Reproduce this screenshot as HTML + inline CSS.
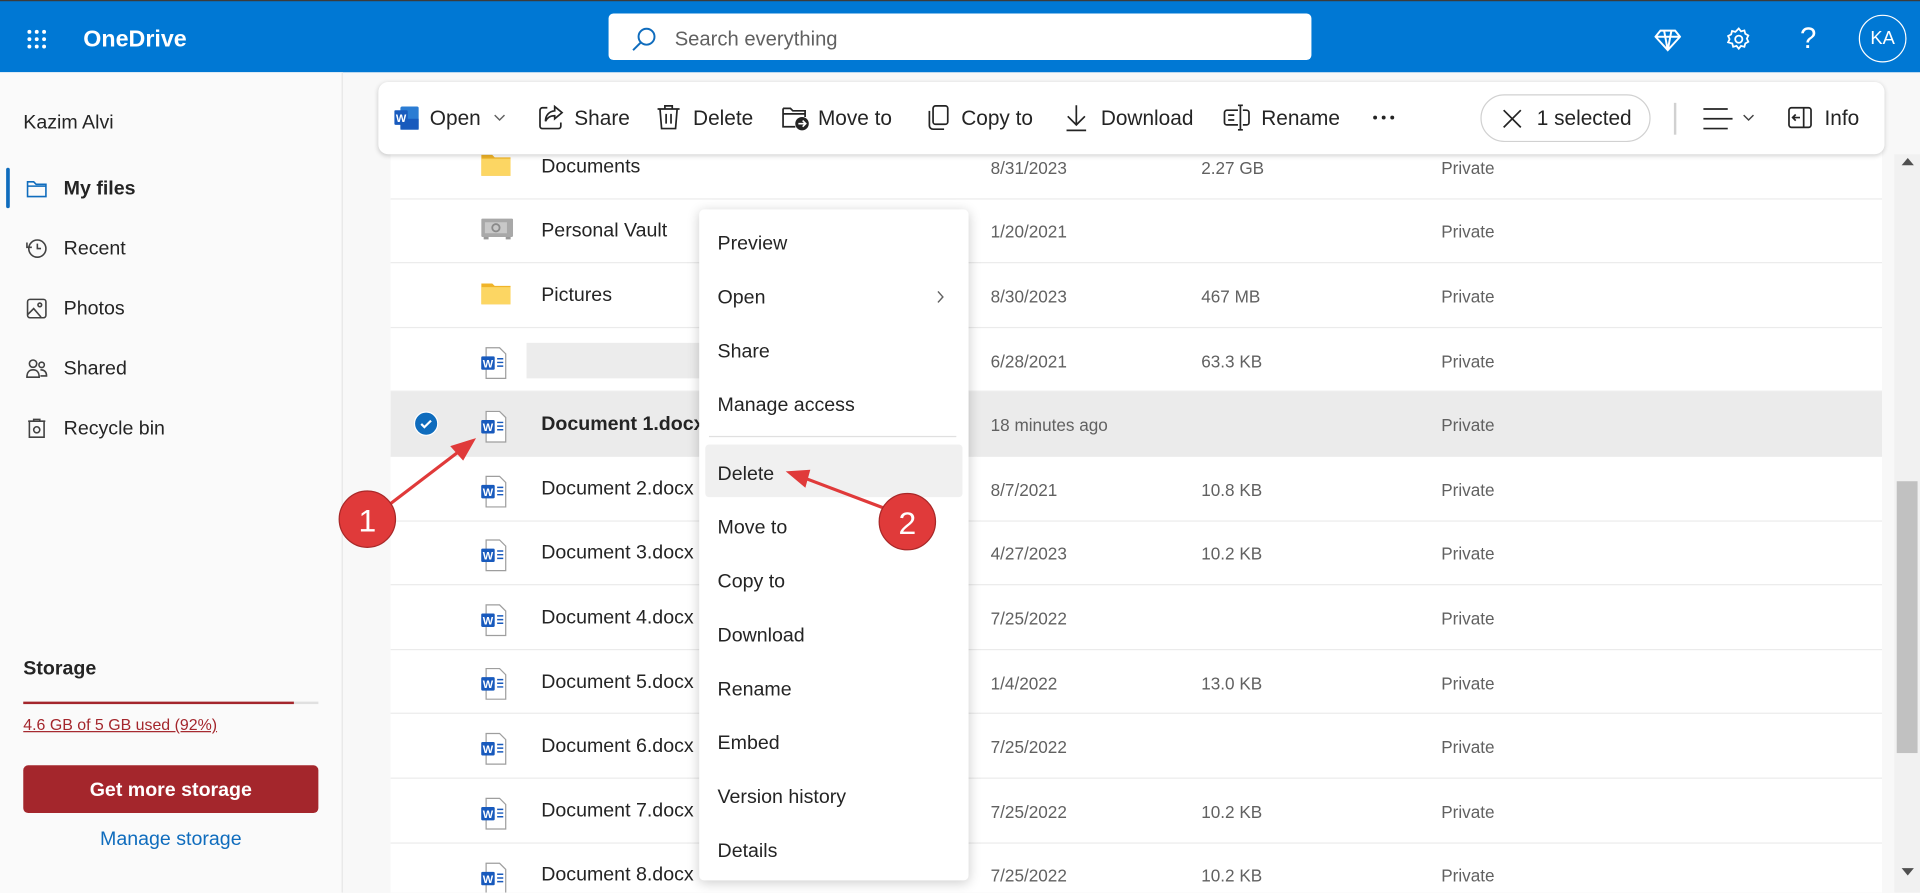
<!DOCTYPE html>
<html><head><meta charset="utf-8"><style>
*{box-sizing:border-box;margin:0;padding:0}
html,body{width:1920px;height:893px;overflow:hidden;background:#f8f8f8}
#s{position:absolute;left:0;top:0;width:1568px;height:729px;transform:scale(1.22449);transform-origin:0 0;font-family:"Liberation Sans",sans-serif;color:#242424;background:#f8f8f8;overflow:hidden}
.a{position:absolute}
.hdr{left:0;top:0;width:1568px;height:59px;background:#0078d4;border-top:1px solid #3b3b3b}
.side{left:0;top:59px;width:280px;height:670px;background:#fafafa;border-right:1px solid #e6e6e6}
.nav{position:absolute;left:52px;font-size:16px;color:#242424;transform:translateY(-50%)}
.ni{position:absolute;left:21px;width:18px;height:18px;transform:translateY(-50%)}
.tbl{left:319px;top:110px;width:1218px;height:619px;background:#fff}
.row{position:absolute;left:0;width:1218px;height:52.6px;border-bottom:1px solid #ebebeb}
.row span{position:absolute;top:52%;transform:translateY(-50%);font-size:16px}
.nm{left:123px;color:#242424}
.dt{left:490px;color:#616161;font-size:14px!important}
.sz{left:662px;color:#616161;font-size:14px!important}
.pv{left:858px;color:#616161;font-size:14px!important}
.ic{left:74px}
.cmd{left:309px;top:67px;width:1230px;height:59px;background:#fff;border-radius:8px;box-shadow:0 1px 4px rgba(0,0,0,.18)}
.ct{position:absolute;top:50%;transform:translateY(-50%);font-size:17px;color:#242424}
.menu{left:571px;top:171px;width:220px;height:548px;background:#fff;border-radius:4px;box-shadow:0 2px 10px rgba(0,0,0,.2)}
.mi{position:absolute;left:15px;font-size:16px;color:#242424;transform:translateY(-40%)}
</style></head><body><div id="s">
<div class="a hdr">
<svg class="a" style="left:21px;top:22px" width="18" height="18" viewBox="0 0 18 18" fill="#fff"><circle cx="3" cy="3" r="1.6"/><circle cx="9" cy="3" r="1.6"/><circle cx="15" cy="3" r="1.6"/><circle cx="3" cy="9" r="1.6"/><circle cx="9" cy="9" r="1.6"/><circle cx="15" cy="9" r="1.6"/><circle cx="3" cy="15" r="1.6"/><circle cx="9" cy="15" r="1.6"/><circle cx="15" cy="15" r="1.6"/></svg>
<div class="a" style="left:68px;top:21px;font-size:19px;font-weight:bold;color:#fff">OneDrive</div>
<div class="a" style="left:497px;top:10px;width:574px;height:38px;background:#fff;border-radius:4px"></div>
<svg class="a" style="left:515px;top:20px" width="22" height="22" viewBox="0 0 22 22" fill="none" stroke="#0f6cbd" stroke-width="1.6"><circle cx="13" cy="9" r="6.5"/><path d="M8.5 13.5L2 20"/></svg>
<div class="a" style="left:551px;top:22px;font-size:16.5px;color:#616161">Search everything</div>
<svg class="a" style="left:1351px;top:22px" width="22" height="20" viewBox="0 0 22 20" fill="none" stroke="#fff" stroke-width="1.6"><path d="M5 2h12l4 5-10 11L1 7z M1 7h20 M8 2l3 16 3-16"/></svg>
<svg class="a" style="left:1409px;top:20px" width="22" height="22" viewBox="0 0 24 24" fill="none" stroke="#fff" stroke-width="1.6"><circle cx="12" cy="12" r="3.2"/><path d="M12 2.5l2 2.5 3-.8.8 3 2.7 1.5-1.3 2.8 1.3 2.8-2.7 1.5-.8 3-3-.8-2 2.5-2-2.5-3 .8-.8-3L2.5 14.8l1.3-2.8-1.3-2.8 2.7-1.5.8-3 3 .8z"/></svg>
<div class="a" style="left:1470px;top:17px;font-size:24px;color:#fff">?</div>
<div class="a" style="left:1518px;top:11px;width:39px;height:39px;border:1px solid #fff;border-radius:50%;color:#fff;font-size:15px;text-align:center;line-height:37px">KA</div>
</div>

<div class="a side">
<div class="a" style="left:19px;top:33px;font-size:16px">Kazim Alvi</div>
<div class="a" style="left:5px;top:78px;width:3px;height:33px;background:#0f6cbd;border-radius:2px"></div>
</div>
<svg class="ni" style="top:154px" viewBox="0 0 18 18" fill="none" stroke="#0f6cbd" stroke-width="1.3"><path d="M1.5 3.5h5l2 2h8v10h-15z M1.5 7h15"/></svg>
<div class="nav" style="top:155px;font-weight:bold">My files</div>
<svg class="ni" style="top:203px" viewBox="0 0 18 18" fill="none" stroke="#424242" stroke-width="1.3"><circle cx="9.5" cy="9" r="7"/><path d="M9.5 5v4h3 M1 4v4h4"/></svg>
<div class="nav" style="top:204px">Recent</div>
<svg class="ni" style="top:252px" viewBox="0 0 18 18" fill="none" stroke="#424242" stroke-width="1.3"><rect x="1.5" y="1.5" width="15" height="15" rx="2"/><circle cx="11.5" cy="6" r="1.5"/><path d="M1.5 14l5-5 6 7"/></svg>
<div class="nav" style="top:253px">Photos</div>
<svg class="ni" style="top:301px" viewBox="0 0 18 18" fill="none" stroke="#424242" stroke-width="1.3"><circle cx="6" cy="5" r="3"/><circle cx="13" cy="6" r="2.2"/><path d="M1 16c0-4 2-6 5-6s5 2 5 6z M12 10c3 0 5 1.5 5 5h-5"/></svg>
<div class="nav" style="top:302px">Shared</div>
<svg class="ni" style="top:350px" viewBox="0 0 18 18" fill="none" stroke="#424242" stroke-width="1.3"><path d="M2 3h14 M3 3v13h12V3 M6.5 3V1.5h5V3"/><circle cx="9" cy="10" r="2.5"/></svg>
<div class="nav" style="top:351px">Recycle bin</div>
<div class="a" style="left:19px;top:538px;font-size:16px;font-weight:bold">Storage</div>
<div class="a" style="left:19px;top:573px;width:241px;height:2px;background:#e0e0e0"></div>
<div class="a" style="left:19px;top:573px;width:221px;height:2px;background:#a4262c"></div>
<div class="a" style="left:19px;top:584px;font-size:13px;color:#a4262c;text-decoration:underline">4.6 GB of 5 GB used (92%)</div>
<div class="a" style="left:19px;top:625px;width:241px;height:39px;background:#a4262c;border-radius:4px;color:#fff;font-weight:bold;font-size:16px;text-align:center;line-height:41px">Get more storage</div>
<div class="a" style="left:19px;top:677px;width:241px;text-align:center;font-size:16px;color:#0f6cbd">Manage storage</div>

<div class="a tbl">
<div class="row" style="top:0"><span class="ic"><svg width="24" height="20" viewBox="0 0 24 20"><path d="M0 2h9l2 2h13v15H0z" fill="#f0b429"/><path d="M0 5h24v14H0z" fill="#fcd663"/></svg></span><span class="nm">Documents</span><span class="dt">8/31/2023</span><span class="sz">2.27 GB</span><span class="pv">Private</span></div>
<div class="row" style="top:52.6px"><span class="ic"><svg width="26" height="20" viewBox="0 0 26 20"><rect x="0" y="2" width="26" height="15" rx="1" fill="#a8a8a8"/><rect x="3" y="5" width="18" height="9" fill="#c8c8c8"/><circle cx="12" cy="9.5" r="3" fill="none" stroke="#8a8a8a" stroke-width="1.5"/><rect x="2" y="17" width="4" height="2" fill="#999"/><rect x="20" y="17" width="4" height="2" fill="#999"/></svg></span><span class="nm">Personal Vault</span><span class="dt">1/20/2021</span><span class="pv">Private</span></div>
<div class="row" style="top:105.2px"><span class="ic"><svg width="24" height="20" viewBox="0 0 24 20"><path d="M0 2h9l2 2h13v15H0z" fill="#f0b429"/><path d="M0 5h24v14H0z" fill="#fcd663"/></svg></span><span class="nm">Pictures</span><span class="dt">8/30/2023</span><span class="sz">467 MB</span><span class="pv">Private</span></div>
<div class="row" style="top:157.8px"><div class="a" style="left:111px;top:12px;width:145px;height:29px;background:#ececec"></div><span class="dt">6/28/2021</span><span class="sz">63.3 KB</span><span class="pv">Private</span></div>
<div class="row" style="top:210.4px;background:#ebebeb"><svg class="a" style="left:19px;top:16px" width="20" height="20" viewBox="0 0 20 20"><circle cx="10" cy="10" r="9.5" fill="#0f6cbd" stroke="#fff" stroke-width="1"/><path d="M6 10.2l2.6 2.6L14 7.5" fill="none" stroke="#fff" stroke-width="1.8"/></svg><span class="nm" style="font-weight:bold">Document 1.docx</span><span class="dt">18 minutes ago</span><span class="pv">Private</span></div>
<div class="row" style="top:263px"><span class="nm">Document 2.docx</span><span class="dt">8/7/2021</span><span class="sz">10.8 KB</span><span class="pv">Private</span></div>
<div class="row" style="top:315.6px"><span class="nm">Document 3.docx</span><span class="dt">4/27/2023</span><span class="sz">10.2 KB</span><span class="pv">Private</span></div>
<div class="row" style="top:368.2px"><span class="nm">Document 4.docx</span><span class="dt">7/25/2022</span><span class="pv">Private</span></div>
<div class="row" style="top:420.8px"><span class="nm">Document 5.docx</span><span class="dt">1/4/2022</span><span class="sz">13.0 KB</span><span class="pv">Private</span></div>
<div class="row" style="top:473.4px"><span class="nm">Document 6.docx</span><span class="dt">7/25/2022</span><span class="pv">Private</span></div>
<div class="row" style="top:526px"><span class="nm">Document 7.docx</span><span class="dt">7/25/2022</span><span class="sz">10.2 KB</span><span class="pv">Private</span></div>
<div class="row" style="top:578.6px"><span class="nm">Document 8.docx</span><span class="dt">7/25/2022</span><span class="sz">10.2 KB</span><span class="pv">Private</span></div>
</div>

<div class="a" style="left:1547px;top:126px;width:21px;height:603px;background:#f1f1f1"></div>
<div class="a" style="left:1549px;top:393px;width:17px;height:222px;background:#c1c1c1"></div>
<div class="a" style="left:1553px;top:129px;border-left:5px solid transparent;border-right:5px solid transparent;border-bottom:6px solid #505050"></div>
<div class="a" style="left:1553px;top:709px;border-left:5px solid transparent;border-right:5px solid transparent;border-top:6px solid #505050"></div>

<div class="a cmd">
<svg class="a" style="left:13px;top:20px" width="20" height="19" viewBox="0 0 20 19"><rect x="5" y="0" width="15" height="19" rx="1.5" fill="#2b7cd3"/><rect x="5" y="10" width="15" height="9" fill="#185abd"/><rect x="0" y="3" width="11" height="12" rx="1" fill="#185abd"/><text x="5.5" y="12.5" font-size="9" font-weight="bold" fill="#fff" text-anchor="middle" font-family="Liberation Sans">W</text></svg>
<span class="ct" style="left:42px">Open</span>
<svg class="a" style="left:94px;top:26px" width="10" height="6" viewBox="0 0 10 6" fill="none" stroke="#616161" stroke-width="1.2"><path d="M1 1l4 4 4-4"/></svg>
<svg class="a" style="left:130px;top:18px" width="22" height="22" viewBox="0 0 22 22" fill="none" stroke="#242424" stroke-width="1.4"><path d="M8 3H4a2 2 0 0 0-2 2v13a2 2 0 0 0 2 2h13a2 2 0 0 0 2-2v-3 M14 2l6 5-6 5V9.5c-4 0-6 1.5-7.5 4.5 0-5 3-8 7.5-8.5z"/></svg>
<span class="ct" style="left:160px">Share</span>
<svg class="a" style="left:227px;top:18px" width="20" height="22" viewBox="0 0 20 22" fill="none" stroke="#242424" stroke-width="1.4"><path d="M1 4h18 M7 4V1.5h6V4 M3 4l1.3 16h11.4L17 4 M8 8v8 M12 8v8"/></svg>
<span class="ct" style="left:257px">Delete</span>
<svg class="a" style="left:329px;top:18px" width="23" height="22" viewBox="0 0 23 22"><path d="M1.5 3.5h6l2 2h10v5 M1.5 3.5v15h10 M1.5 8h18" fill="none" stroke="#242424" stroke-width="1.4"/><circle cx="17" cy="16" r="5.5" fill="#242424"/><path d="M14 16h6 M17.5 13.5L20 16l-2.5 2.5" fill="none" stroke="#fff" stroke-width="1.3"/></svg>
<span class="ct" style="left:359px">Move to</span>
<svg class="a" style="left:447px;top:18px" width="20" height="22" viewBox="0 0 20 22" fill="none" stroke="#242424" stroke-width="1.4"><rect x="6" y="1.5" width="12" height="15" rx="2"/><path d="M3 5.5v12a3 3 0 0 0 3 3h9"/></svg>
<span class="ct" style="left:476px">Copy to</span>
<svg class="a" style="left:561px;top:17px" width="18" height="24" viewBox="0 0 18 24" fill="none" stroke="#242424" stroke-width="1.4"><path d="M9 2v16 M2 11l7 7 7-7 M1 22.5h16"/></svg>
<span class="ct" style="left:590px">Download</span>
<svg class="a" style="left:690px;top:18px" width="22" height="22" viewBox="0 0 22 22" fill="none" stroke="#242424" stroke-width="1.4"><path d="M12 5H3a2 2 0 0 0-2 2v8a2 2 0 0 0 2 2h9 M16 5h3a2 2 0 0 1 2 2v8a2 2 0 0 1-2 2h-3 M14 1v20 M12 1h4 M12 21h4 M4 9h5 M4 13h5"/></svg>
<span class="ct" style="left:721px">Rename</span>
<svg class="a" style="left:812px;top:27px" width="18" height="4" viewBox="0 0 18 4" fill="#242424"><circle cx="2" cy="2" r="1.6"/><circle cx="9" cy="2" r="1.6"/><circle cx="16" cy="2" r="1.6"/></svg>
<div class="a" style="left:900px;top:10px;width:139px;height:39px;border:1px solid #d1d1d1;border-radius:20px"></div>
<svg class="a" style="left:918px;top:22px" width="16" height="16" viewBox="0 0 16 16" stroke="#242424" stroke-width="1.4"><path d="M1 1l14 14 M15 1L1 15"/></svg>
<span class="ct" style="left:946px">1 selected</span>
<div class="a" style="left:1058px;top:17px;width:2px;height:26px;background:#d1d1d1"></div>
<svg class="a" style="left:1082px;top:21px" width="24" height="18" viewBox="0 0 24 18" stroke="#242424" stroke-width="1.4"><path d="M0 1h20 M0 9h24 M0 17h20"/></svg>
<svg class="a" style="left:1114px;top:26px" width="10" height="6" viewBox="0 0 10 6" fill="none" stroke="#424242" stroke-width="1.2"><path d="M1 1l4 4 4-4"/></svg>
<svg class="a" style="left:1151px;top:20px" width="20" height="18" viewBox="0 0 20 18" fill="none" stroke="#242424" stroke-width="1.4"><rect x="1" y="1" width="18" height="16" rx="2"/><path d="M13 1v16 M4 9h6 M6.5 6.5L4 9l2.5 2.5"/></svg>
<span class="ct" style="left:1181px">Info</span>
</div>

<div class="a menu">
<div class="a" style="left:5px;top:192px;width:210px;height:43px;background:#f0f0f0;border-radius:3px"></div>
<div class="a" style="left:8px;top:185px;width:202px;height:1px;background:#e0e0e0"></div>
<div class="mi" style="top:27px">Preview</div>
<div class="mi" style="top:71px">Open</div>
<svg class="a" style="left:194px;top:66px" width="6" height="11" viewBox="0 0 6 11" fill="none" stroke="#616161" stroke-width="1.2"><path d="M1 1l4 4.5L1 10"/></svg>
<div class="mi" style="top:115px">Share</div>
<div class="mi" style="top:159px">Manage access</div>
<div class="mi" style="top:215px">Delete</div>
<div class="mi" style="top:259px">Move to</div>
<div class="mi" style="top:303px">Copy to</div>
<div class="mi" style="top:347px">Download</div>
<div class="mi" style="top:391px">Rename</div>
<div class="mi" style="top:435px">Embed</div>
<div class="mi" style="top:479px">Version history</div>
<div class="mi" style="top:523px">Details</div>
</div>

<svg class="a" style="left:0;top:0" width="1568" height="729">
<defs><g id="w"><path d="M5 1h11l5 5v20H5z" fill="#fff" stroke="#9e9e9e" stroke-width="1"/><rect x="1" y="8" width="11" height="11" rx="1" fill="#185abd"/><text x="6.5" y="17" font-size="9" font-weight="bold" fill="#fff" text-anchor="middle" font-family="Liberation Sans">W</text><path d="M14 10h5 M14 13h5 M14 16h5" stroke="#185abd" stroke-width="1.2"/></g></defs>
<use href="#w" x="392" y="283"/><use href="#w" x="392" y="335"/><use href="#w" x="392" y="388"/><use href="#w" x="392" y="440"/><use href="#w" x="392" y="493"/><use href="#w" x="392" y="545"/><use href="#w" x="392" y="598"/><use href="#w" x="392" y="651"/><use href="#w" x="392" y="704"/>
<g stroke="#e03a3a" stroke-width="2.6" fill="#e03a3a">
<path d="M318 412L377 367"/><path d="M386 360l-16 5 8 9z"/>
<path d="M722 415L656 390"/><path d="M645 386l12 10 3-11z"/>
</g>
<circle cx="300" cy="424" r="23" fill="#e03a3a" stroke="#a82828" stroke-width="1"/>
<text x="300" y="434" font-size="26" fill="#fff" text-anchor="middle" font-family="Liberation Sans">1</text>
<circle cx="741" cy="426" r="23" fill="#e03a3a" stroke="#a82828" stroke-width="1"/>
<text x="741" y="436" font-size="26" fill="#fff" text-anchor="middle" font-family="Liberation Sans">2</text>
</svg>
</div></body></html>
